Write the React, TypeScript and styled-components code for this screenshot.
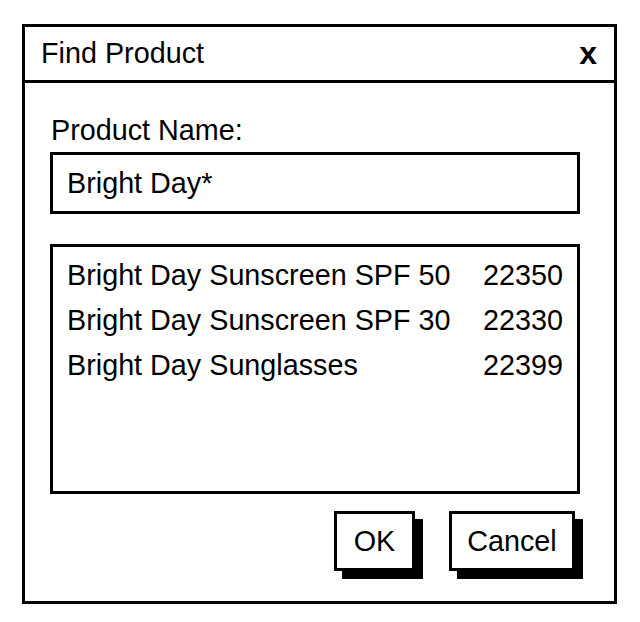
import * as React from "react";
import styled, { createGlobalStyle } from "styled-components";

type Product = {
  name: string;
  code: string;
};

const products: Product[] = [
  { name: "Bright Day Sunscreen SPF 50", code: "22350" },
  { name: "Bright Day Sunscreen SPF 30", code: "22330" },
  { name: "Bright Day Sunglasses", code: "22399" },
];

const GlobalStyle = createGlobalStyle`
  html, body {
    margin: 0;
    padding: 0;
    background: #ffffff;
  }
  body {
    font-family: "Liberation Sans", Arial, Helvetica, sans-serif;
    color: #000000;
  }
`;

export default function App() {
  return (
    <>
      <GlobalStyle />
      <Page>
        <Dialog>
          <TitleBar>
            <Title>Find Product</Title>
            <CloseButton>x</CloseButton>
          </TitleBar>
          <DialogBody>
            <FieldLabel>Product Name:</FieldLabel>
            <SearchField>Bright Day*</SearchField>
            <ResultList>
              {products.map((p) => (
                <ResultRow key={p.code}>
                  <span>{p.name}</span>
                  <span>{p.code}</span>
                </ResultRow>
              ))}
            </ResultList>
            <ButtonRow>
              <ShadowButton $width={81}>OK</ShadowButton>
              <ShadowButton $width={126}>Cancel</ShadowButton>
            </ButtonRow>
          </DialogBody>
        </Dialog>
      </Page>
    </>
  );
}

const Page = styled.div`
  padding: 24px 0 0 22px;
`;

const Dialog = styled.div`
  width: 589px;
  height: 574px;
  border: 3px solid #000;
  display: flex;
  flex-direction: column;
  background: #fff;
`;

const TitleBar = styled.div`
  height: 53px;
  border-bottom: 3px solid #000;
  display: flex;
  align-items: center;
  justify-content: space-between;
  padding: 0 17px 0 16px;
  font-size: 28.75px;
`;

const Title = styled.div`
  line-height: 1;
`;

const CloseButton = styled.div`
  font-size: 32px;
  font-weight: bold;
  line-height: 1;
  margin-top: -2px;
  cursor: pointer;
`;

const DialogBody = styled.div`
  display: flex;
  flex-direction: column;
  padding: 31px 34px 0 25px;
`;

const FieldLabel = styled.div`
  font-size: 28.75px;
  line-height: 33px;
  padding-left: 1px;
  margin-bottom: 5px;
`;

const SearchField = styled.div`
  height: 56px;
  border: 3px solid #000;
  display: flex;
  align-items: center;
  padding-left: 14px;
  font-size: 28.75px;
`;

const ResultList = styled.div`
  margin-top: 30px;
  height: 250px;
  box-sizing: border-box;
  border: 3px solid #000;
  padding: 6px 14px 0 14px;
`;

const ResultRow = styled.div`
  display: flex;
  justify-content: space-between;
  font-size: 28.75px;
  line-height: 45px;
`;

const ButtonRow = styled.div`
  display: flex;
  justify-content: flex-end;
  gap: 34px;
  margin-top: 17px;
  padding-right: 5px;
`;

const ShadowButton = styled.button<{ $width: number }>`
  width: ${(p) => p.$width}px;
  height: 60px;
  border: 3px solid #000;
  background: #fff;
  box-shadow: 8px 8px 0 #000;
  font-family: "Liberation Sans", Arial, Helvetica, sans-serif;
  font-size: 28.75px;
  color: #000;
  padding: 0;
  border-radius: 0;
  cursor: pointer;
`;
